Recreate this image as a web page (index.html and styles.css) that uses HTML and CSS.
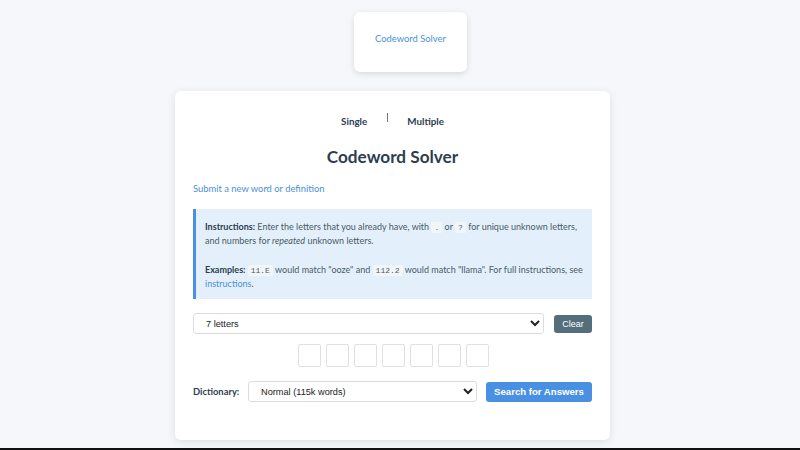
FILE: index.html
```html
<!DOCTYPE html>
<html>
<head>
<meta charset="utf-8">
<link rel="stylesheet" href="styles.css">
</head>
<body>
<div class="page">
  <div class="brand-card"><a class="brand-link">Codeword Solver</a></div>
  <div class="card">
    <div class="tabs">
      <span class="tab">Single</span>
      <span class="sep"></span>
      <span class="tab">Multiple</span>
    </div>
    <h1 class="title">Codeword Solver</h1>
    <a class="submit-link">Submit a new word or definition</a>
    <div class="info">
      <p><b>Instructions:</b> Enter the letters that you already have, with <code>.</code> or <code>?</code> for unique unknown letters, and numbers for <i>repeated</i> unknown letters.</p>
      <p><b>Examples:</b> <code>11.E</code> would match "ooze" and <code>112.2</code> would match "llama". For full instructions, see <a class="inline-link">instructions</a>.</p>
    </div>
    <div class="row">
      <select class="sel sel-len"><option>7 letters</option></select>
      <button class="btn btn-clear">Clear</button>
    </div>
    <div class="boxes">
      <input class="box"><input class="box"><input class="box"><input class="box"><input class="box"><input class="box"><input class="box">
    </div>
    <div class="row dict-row">
      <label class="dict-label">Dictionary:</label>
      <select class="sel sel-dict"><option>Normal (115k words)</option></select>
      <button class="btn btn-search">Search for Answers</button>
    </div>
  </div>
</div>
<div class="footer"></div>
</body>
</html>
```
FILE: styles.css
```css
html, body {
  margin: 0;
  padding: 0;
}
body {
  background: #f5f7fa;
  font-family: "Lato", "Noto Sans", sans-serif;
  color: #2c3e50;
  width: 800px;
  height: 450px;
  overflow: hidden;
  position: relative;
}
.page {
  width: 785px;
  display: flex;
  flex-direction: column;
  align-items: center;
  padding-top: 12px;
}
.brand-card {
  width: 113px;
  height: 60px;
  margin-left: 36px;
  background: #fff;
  border-radius: 6px;
  box-shadow: 0 2px 6px rgba(0,0,0,0.12);
  display: flex;
  align-items: center;
  justify-content: center;
  box-sizing: border-box;
  padding-bottom: 8px;
}
.brand-link {
  color: #4a90d9;
  font-size: 9.4px;
}
.card {
  margin-top: 19px;
  width: 435px;
  height: 349px;
  box-sizing: border-box;
  background: #fff;
  border-radius: 6px;
  box-shadow: 0 2px 8px rgba(0,0,0,0.10);
  padding: 20px 18px 18px;
  display: flex;
  flex-direction: column;
}
.tabs {
  display: flex;
  justify-content: center;
  align-items: flex-start;
  height: 20px;
}
.tab {
  font-size: 9.8px;
  font-weight: 700;
  color: #2c3e50;
  padding: 3px 0 4px;
  line-height: 14px;
}
.sep {
  width: 1px;
  height: 9px;
  background: #777;
  margin: 2px 19px 0 20px;
}
.title {
  margin: 14px 0 0;
  font-size: 17.2px;
  font-weight: 700;
  text-align: center;
  line-height: 24px;
  color: #2c3e50;
}
.submit-link {
  margin-top: 13px;
  font-size: 9.4px;
  color: #4a90d9;
  line-height: 14px;
}
.info {
  margin-top: 13px;
  height: 90px;
  box-sizing: border-box;
  background: #e3f0fb;
  border-left: 3px solid #4a90e2;
  padding: 11px 6px 0 9px;
  font-size: 9px;
  line-height: 14px;
  color: #4a5a66;
}
.info p {
  margin: 0;
}
.info p + p {
  margin-top: 15px;
}
.info b {
  color: #2c3e50;
}
.info code {
  font-family: "Liberation Mono", "DejaVu Sans Mono", monospace;
  font-size: 8px;
  line-height: 1;
  background: #f3f6f9;
  padding: 1px 3px;
  border-radius: 2px;
}
.inline-link {
  color: #4a90d9;
}
.row {
  display: flex;
  align-items: center;
  margin-top: 14px;
}
.sel {
  font-family: "Liberation Sans", Arial, sans-serif;
  font-size: 9.2px;
  color: #222;
  height: 21px;
  border: 1px solid #ddd;
  border-radius: 3px;
  background: #fff;
  padding: 0 8px;
}
.sel-len {
  flex: 1;
}
.btn {
  font-family: "Liberation Sans", Arial, sans-serif;
  border: none;
  border-radius: 3px;
  color: #fff;
  font-size: 9px;
}
.btn-clear {
  margin-left: 10px;
  background: #546e7a;
  width: 38px;
  height: 18px;
  padding: 0;
}
.boxes {
  display: flex;
  justify-content: center;
  gap: 5px;
  margin-top: 10px;
  padding-left: 1px;
}
.box {
  width: 23px;
  height: 23px;
  box-sizing: border-box;
  border: 1px solid #e0e0e0;
  border-radius: 2px;
  padding: 0;
  margin: 0;
}
.dict-row {
  margin-top: 14px;
}
.dict-label {
  font-size: 9.4px;
  font-weight: 700;
  color: #2c3e50;
  width: 55px;
}
.sel-dict {
  flex: 1;
}
.btn-search {
  margin-left: 9px;
  background: #4a90e2;
  font-weight: 700;
  font-size: 9.6px;
  width: 106px;
  height: 20px;
  padding: 0;
}
.footer {
  position: absolute;
  left: 0;
  right: 0;
  top: 448px;
  height: 2px;
  background: #111;
}
```
